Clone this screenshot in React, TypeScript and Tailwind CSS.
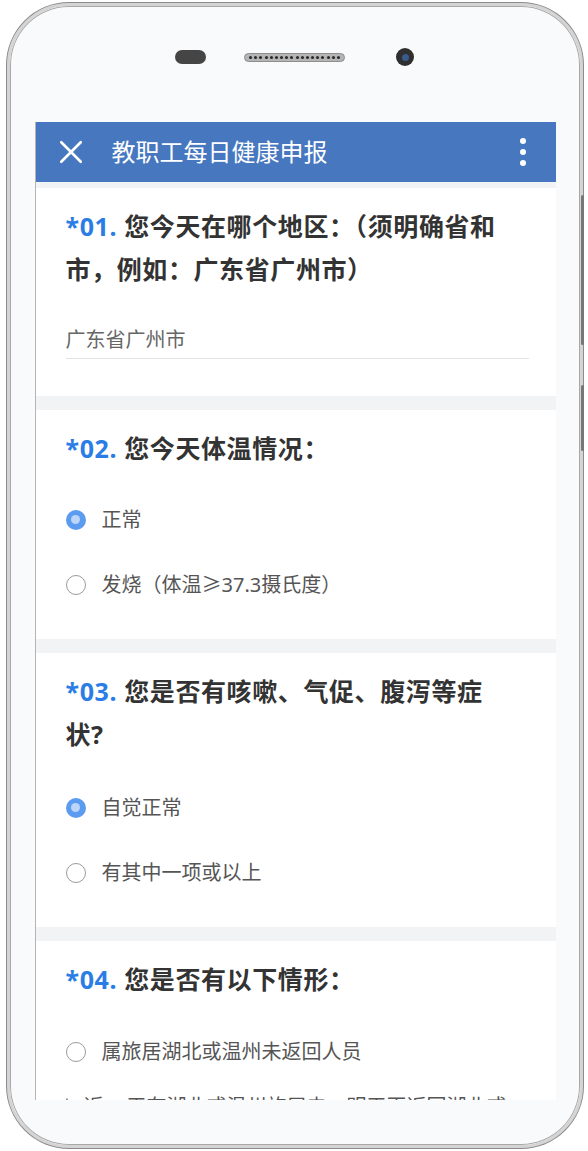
import React from "react";

const font = "font-['Noto_Sans','Noto_Sans_CJK_SC',sans-serif]";

const Radio = ({ checked }: { checked?: boolean }) =>
  checked ? (
    <span className="w-[20px] h-[20px] shrink-0 rounded-full bg-[#5c9cf0] flex items-center justify-center">
      <span className="w-[9px] h-[9px] rounded-full bg-[#bcd5f8]" />
    </span>
  ) : (
    <span className="w-[20px] h-[20px] shrink-0 rounded-full border-[1.5px] border-[#9a9a9a] bg-white" />
  );

const Option = ({ label, checked }: { label: string; checked?: boolean }) => (
  <div className="min-h-[65px] flex items-center gap-[16px]">
    <Radio checked={checked} />
    <span className="text-[20px] leading-[30px] text-[#555]">{label}</span>
  </div>
);

const Question = ({
  no,
  title,
  children,
}: {
  no: string;
  title: string;
  children: React.ReactNode;
}) => (
  <section className="bg-white pl-[30px] pr-[45px] pt-[17px]">
    <h2 className="text-[25px] leading-[43px] font-bold tracking-[0.6px] text-[#333]">
      <span className="text-[#2b7de6]">*{no}.</span> {title}
    </h2>
    {children}
  </section>
);

export default function App() {
  return (
    <div className={`w-[588px] h-[1151px] bg-white pt-[3px] pl-[7px] relative ${font}`}>
      {/* side buttons */}
      <div className="absolute left-[581px] top-[195px] w-[3px] h-[150px] bg-[#777] rounded-full" />
      <div className="absolute left-[581px] top-[385px] w-[3px] h-[66px] bg-[#777] rounded-full" />

      <div className="w-[576px] h-[1145px] rounded-[62px] border-[3px] border-[#d4d4d4] shadow-[0_0_0_1px_#8c8c8c,inset_0_0_0_1px_#a8a8a8] bg-[#f9fafb] flex flex-col items-center overflow-hidden">
        {/* top bezel */}
        <div className="h-[116px] w-full flex items-start pt-[44px] pl-[165px]">
          <div className="w-[31px] h-[14px] rounded-full bg-[#454545]" />
          <div className="ml-[38px] w-[101px] h-[9px] mt-[2.5px] rounded-full bg-[#b5b5b5] border border-[#8e8e8e] flex items-center justify-between px-[4px]">
            {Array.from({ length: 18 }).map((_, i) => (
              <span key={i} className="w-[3px] h-[3px] rounded-full bg-[#2a2a2a]" />
            ))}
          </div>
          <div className="ml-[51px] -mt-[2px] w-[18px] h-[18px] rounded-full bg-[#2f2f2f] flex items-center justify-center">
            <span className="w-[7px] h-[7px] rounded-full bg-[#3b5a8c]" />
          </div>
        </div>

        {/* screen */}
        <div className="w-[521px] h-[978px] overflow-hidden border-l border-[#b5b5b5] bg-[#f2f3f5] flex flex-col">
          <header className="h-[60px] shrink-0 bg-[#4677bf] flex items-center pl-[22px] pr-[30px]">
            <svg width="26" height="26" viewBox="0 0 24 24" fill="none" stroke="white" strokeWidth="2.4" strokeLinecap="round">
              <path d="M3 3L21 21M21 3L3 21" />
            </svg>
            <h1 className="ml-[28px] text-[24px] text-white flex-1">教职工每日健康申报</h1>
            <div className="flex flex-col gap-[5px]">
              <span className="w-[6px] h-[6px] rounded-full bg-white" />
              <span className="w-[6px] h-[6px] rounded-full bg-white" />
              <span className="w-[6px] h-[6px] rounded-full bg-white" />
            </div>
          </header>

          <div className="pt-[6px] flex flex-col gap-[14px]">
            <Question no="01" title="您今天在哪个地区：（须明确省和市，例如：广东省广州市）">
              <div className="mt-[34px] mr-[-18px] border-b border-[#e2e2e2] pb-[3px] text-[20px] leading-[30px] text-[#666]">
                广东省广州市
              </div>
              <div className="h-[37px]" />
            </Question>

            <Question no="02" title="您今天体温情况：">
              <div className="mt-[17px] pb-[22px]">
                <Option label="正常" checked />
                <Option label="发烧（体温≥37.3摄氏度）" />
              </div>
            </Question>

            <Question no="03" title="您是否有咳嗽、气促、腹泻等症状?">
              <div className="mt-[19px] pb-[22px]">
                <Option label="自觉正常" checked />
                <Option label="有其中一项或以上" />
              </div>
            </Question>

            <Question no="04" title="您是否有以下情形：">
              <div className="mt-[18px] pb-[22px]">
                <Option label="属旅居湖北或温州未返回人员" />
                <div className="flex items-start gap-[16px] pt-[8px]">
                  <span className="mt-[6px]">
                    <Radio />
                  </span>
                  <span className="text-[20px] leading-[30px] text-[#555]">
                    近14天有湖北或温州旅居史，明天再返回湖北或温州的人员
                  </span>
                </div>
              </div>
            </Question>
          </div>
        </div>
      </div>
    </div>
  );
}
